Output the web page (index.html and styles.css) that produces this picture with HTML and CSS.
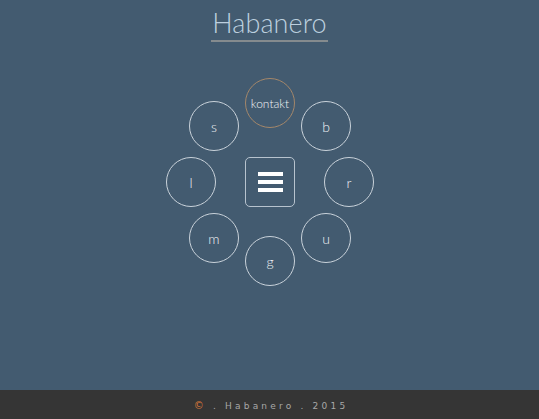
FILE: index.html
```html
<!DOCTYPE html>
<html>
<head>
<meta charset="utf-8">
<link rel="stylesheet" href="styles.css">
</head>
<body>
<div class="page">
  <header class="head">
    <h1 class="title">Habanero</h1>
  </header>
  <main class="main">
    <nav class="radial">
      <a class="node n-kontakt accent">kontakt</a>
      <a class="node n-s">s</a>
      <a class="node n-b">b</a>
      <a class="node n-l">l</a>
      <a class="node n-r">r</a>
      <a class="node n-m">m</a>
      <a class="node n-u">u</a>
      <a class="node n-g">g</a>
      <button class="toggle" aria-label="menu">
        <span class="bar"></span><span class="bar"></span><span class="bar"></span>
      </button>
    </nav>
  </main>
  <footer class="foot">
    <p class="foot-text"><span class="copy">©</span> . Habanero . 2015</p>
  </footer>
</div>
</body>
</html>
```
FILE: styles.css
```css
html, body {
  margin: 0;
  padding: 0;
  height: 100%;
}
body {
  background: #435b70;
  font-family: Lato, "Open Sans", sans-serif;
  color: #dfe5ea;
}
.page {
  display: flex;
  flex-direction: column;
  height: 100%;
}
.head {
  display: flex;
  justify-content: center;
  padding-top: 8px;
}
.title {
  margin: 0;
  font-weight: 300;
  font-size: 27px;
  line-height: 30px;
  color: #bccfdf;
  padding: 0 1px 2px;
  border-bottom: 2px solid #858b8e;
  letter-spacing: 0.1px;
}
.main {
  flex: 1;
  display: flex;
  justify-content: center;
  padding-top: 35px;
}
.radial {
  position: relative;
  width: 210px;
  height: 210px;
  margin-left: 1px;
}
.node {
  position: absolute;
  box-sizing: border-box;
  width: 50px;
  height: 50px;
  border: 1px solid #c9d2da;
  border-radius: 50%;
  display: flex;
  align-items: center;
  justify-content: center;
  font-size: 14px;
  font-weight: 300;
  color: #f0f3f6;
  left: 80px;
  top: 80px;
}
.node.accent {
  border-color: #a4876a;
  font-size: 12px;
}
.n-kontakt { transform: translate(0, -79px); }
.n-s { transform: translate(-56px, -56px); }
.n-b { transform: translate(56px, -56px); }
.n-l { transform: translate(-79px, 0); }
.n-r { transform: translate(79px, 0); }
.n-m { transform: translate(-56px, 56px); }
.n-u { transform: translate(56px, 56px); }
.n-g { transform: translate(0, 79px); }
.toggle {
  position: absolute;
  left: 80px;
  top: 80px;
  box-sizing: border-box;
  width: 50px;
  height: 50px;
  border: 1px solid #b7c3ce;
  border-radius: 5px;
  background: transparent;
  padding: 0;
  display: flex;
  flex-direction: column;
  align-items: center;
  justify-content: center;
  gap: 4px;
}
.bar {
  display: block;
  width: 25px;
  height: 4px;
  background: #ffffff;
}
.foot {
  height: 29px;
  background: #353535;
  display: flex;
  align-items: center;
  justify-content: center;
}
.foot-text {
  margin: 0;
  font-family: "DejaVu Sans", sans-serif;
  font-size: 9px;
  line-height: 12px;
  letter-spacing: 3.2px;
  color: #a8a8a8;
  white-space: pre;
  padding-left: 3px;
  padding-top: 2px;
}
.copy {
  color: #d9793a;
  font-size: 10px;
}
```
